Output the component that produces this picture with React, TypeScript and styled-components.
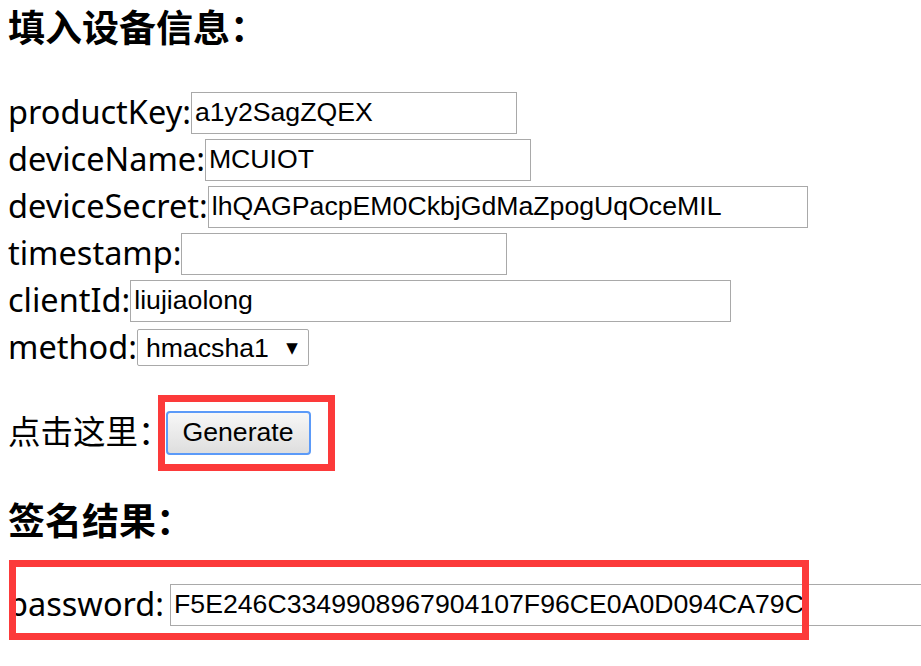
import React, { useState } from 'react'
import styled, { createGlobalStyle } from 'styled-components'

const GlobalStyle = createGlobalStyle`
  html, body {
    margin: 0;
    padding: 0;
    background: #fff;
  }
  body {
    font-family: 'Noto Sans', 'Noto Sans CJK SC', sans-serif;
    color: #000;
  }
`

const Page = styled.div`
  box-sizing: border-box;
  width: 100vw;
  min-height: 666px;
  padding: 0 0 0 8px;
  overflow: hidden;
`

const Heading = styled.h3<{ $top?: number }>`
  margin: ${(p) => p.$top ?? 0}px 0 0;
  height: 53px;
  line-height: 53px;
  font-family: 'Noto Sans CJK SC', sans-serif;
  font-size: 37px;
  font-weight: 700;
`

const Form = styled.div`
  margin-top: 36px;
  display: flex;
  flex-direction: column;
`

const Row = styled.div<{ $top?: number }>`
  position: relative;
  display: flex;
  align-items: center;
  height: 47px;
  margin-top: ${(p) => p.$top ?? 0}px;
`

const Label = styled.span`
  font-family: 'Noto Sans', 'Noto Sans CJK SC', sans-serif;
  font-size: 32.5px;
  line-height: 1;
  white-space: pre;
`

const TextInput = styled.input<{ $width: number; $gap?: number }>`
  box-sizing: border-box;
  flex: none;
  width: ${(p) => p.$width}px;
  height: 42px;
  margin-left: ${(p) => p.$gap ?? 0}px;
  padding: 0 3px;
  border: 1px solid #a9a9a9;
  font-family: 'Liberation Sans', Arial, sans-serif;
  font-size: 26.67px;
  color: #000;
  background: #fff;
  outline: none;
`

const SelectBox = styled.label`
  box-sizing: border-box;
  display: inline-flex;
  align-items: center;
  width: 172px;
  height: 37px;
  border: 1px solid #a9a9a9;
  border-radius: 2px;
  background: #fff;
  padding: 0 10px 0 8px;
`

const Select = styled.select`
  appearance: none;
  flex: 1;
  border: none;
  outline: none;
  background: transparent;
  padding: 0;
  font-family: 'Liberation Sans', Arial, sans-serif;
  font-size: 26.67px;
  color: #000;
`

const Caret = styled.span`
  font-family: 'DejaVu Sans', sans-serif;
  font-size: 15px;
  pointer-events: none;
`

const Button = styled.button`
  box-sizing: border-box;
  width: 145px;
  height: 44px;
  margin-left: -5px;
  border: 2px solid #5b9af8;
  border-radius: 4px;
  background: linear-gradient(#f7f7f7, #dedede);
  font-family: 'Liberation Sans', Arial, sans-serif;
  font-size: 26.67px;
  color: #000;
  padding: 0;
  cursor: pointer;
`

const Frame = styled.div`
  position: absolute;
  border: 7px solid #fc3a3a;
  pointer-events: none;
`

const fields = [
  { name: 'productKey', value: 'a1y2SagZQEX', width: 326 },
  { name: 'deviceName', value: 'MCUIOT', width: 326 },
  { name: 'deviceSecret', value: 'lhQAGPacpEM0CkbjGdMaZpogUqOceMIL', width: 600 },
  { name: 'timestamp', value: '', width: 326 },
  { name: 'clientId', value: 'liujiaolong', width: 601 },
]

export default function App() {
  const [values, setValues] = useState<Record<string, string>>(
    Object.fromEntries(fields.map((f) => [f.name, f.value])),
  )
  const [method, setMethod] = useState('hmacsha1')
  const [password, setPassword] = useState('F5E246C3349908967904107F96CE0A0D094CA79C')

  return (
    <Page>
      <GlobalStyle />
      <Heading>填入设备信息：</Heading>
      <Form>
        {fields.map((f) => (
          <Row key={f.name}>
            <Label>{f.name}:</Label>
            <TextInput
              $width={f.width}
              value={values[f.name]}
              onChange={(e) => setValues({ ...values, [f.name]: e.target.value })}
            />
          </Row>
        ))}
        <Row>
          <Label>method:</Label>
          <SelectBox>
            <Select value={method} onChange={(e) => setMethod(e.target.value)}>
              <option value='hmacsha1'>hmacsha1</option>
              <option value='hmacmd5'>hmacmd5</option>
            </Select>
            <Caret>▼</Caret>
          </SelectBox>
        </Row>
        <Row $top={38}>
          <Label>点击这里：</Label>
          <Button onClick={() => setPassword(password)}>Generate</Button>
          <Frame style={{ left: 150, top: -14, width: 163, height: 62 }} />
        </Row>
      </Form>
      <Heading $top={37}>签名结果：</Heading>
      <Row $top={35}>
        <Label>password:</Label>
        <TextInput
          $width={760}
          $gap={6}
          value={password}
          onChange={(e) => setPassword(e.target.value)}
        />
        <Frame style={{ left: 1, top: -21, width: 786, height: 66 }} />
      </Row>
    </Page>
  )
}
